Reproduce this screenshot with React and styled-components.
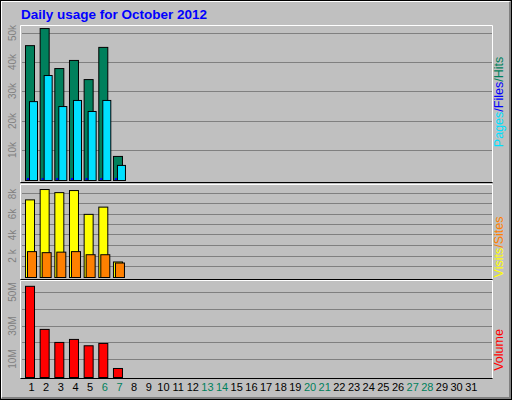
import React from "react";
import styled, { createGlobalStyle } from "styled-components";

const Global = createGlobalStyle`
  html, body { margin: 0; padding: 0; background: #fff; }
  body { font-family: "Liberation Sans", Arial, sans-serif; }
`;

const Frame = styled.div`
  width: 512px;
  height: 400px;
  box-sizing: border-box;
  border: 1px solid #000;
  background: #c0c0c0;
`;

const Bevel = styled.div`
  width: 510px;
  height: 398px;
  box-sizing: border-box;
  border-top: 1px solid #fff;
  border-left: 1px solid #fff;
  border-right: 2px solid #808080;
  border-bottom: 2px solid #808080;
`;

const Chart = styled.svg`
  display: block;
  font-family: "Liberation Sans", Arial, sans-serif;
`;

const hits = [46.5, 52.4, 38.6, 41.4, 34.8, 45.9, 8.3];
const files = [27.2, 36.2, 25.5, 27.6, 23.8, 27.6, 5.2];
const visits = [7.5, 8.5, 8.2, 8.4, 6.1, 6.8, 1.5];
const sites = [2.5, 2.4, 2.45, 2.5, 2.2, 2.2, 1.4];
const vol = [54.6, 28.8, 21, 22.8, 19, 20.4, 5.4];
const weekend = [6, 7, 13, 14, 20, 21, 27, 28];

const gx = (i) => 23 + i * 14.66;

function Bar({ x, w, top, base, fill }) {
  return <rect x={x + 0.5} y={top + 0.5} width={w} height={Math.max(base - top, 1)} fill={fill} stroke="#000" strokeWidth="1" />;
}

function Panel({ y1, y2, lines }) {
  return (
    <g>
      {lines.map((ly) => (
        <line key={ly} x1="20" x2="490" y1={ly + 0.5} y2={ly + 0.5} stroke="#808080" strokeWidth="1" />
      ))}
      <path d={`M18.5 ${y2} V${y1 + 0.5} H490.5 V${y2}`} fill="none" stroke="#fff" strokeWidth="1" />
      <path d={`M18.5 ${y2 + 0.5} H490.5`} stroke="#000" strokeWidth="1" />
    </g>
  );
}

export default function App() {
  const b1 = 178, k1 = 2.9;
  const b2 = 275, k2 = 10.35;
  const b3 = 375, k3 = 1.67;
  return (
    <>
      <Global />
      <Frame>
        <Bevel>
          <Chart width="507" height="395" viewBox="0 0 507 395">
            <text x="19" y="17" fill="#0000ff" fontWeight="bold" fontSize="13.5">Daily usage for October 2012</text>

            <Panel y1={23} y2={180} lines={[31, 60, 89, 119, 148]} />
            <Panel y1={182} y2={277} lines={[191, 201, 212, 222, 232, 243, 254, 264]} />
            <Panel y1={278} y2={376} lines={[290, 307, 324, 340, 357]} />

            {[["50k", 31], ["40k", 60], ["30k", 89], ["20k", 119], ["10k", 148], ["8k", 192], ["6k", 212], ["4k", 233], ["2 k", 254], ["50M", 290], ["30M", 324], ["10M", 357]].map(([t, y]) => (
              <text key={t} transform={`translate(14 ${y}) rotate(-90)`} textAnchor="middle" fontSize="10" fill="#808080">{t}</text>
            ))}

            {hits.map((h, i) => {
              const x = gx(i);
              return (
                <g key={i}>
                  <Bar x={x} w={9} top={b1 - h * k1} base={b1} fill="#00805c" />
                  <rect x={x + 2} y={b1 - 2} width="2" height="2" fill="#0000ff" />
                  <Bar x={x + 4} w={8} top={b1 - files[i] * k1} base={b1} fill="#00e0ff" />
                  <Bar x={x} w={9} top={b2 - visits[i] * k2} base={b2} fill="#ffff00" />
                  <Bar x={x + 2} w={9} top={b2 - sites[i] * k2} base={b2} fill="#ff8000" />
                  <Bar x={x} w={9} top={b3 - vol[i] * k3} base={b3} fill="#ff0000" />
                </g>
              );
            })}

            {Array.from({ length: 31 }, (_, i) => i + 1).map((d) => (
              <text key={d} x={gx(d - 1) + 6.5} y="389" textAnchor="middle" fontSize="11" fill={weekend.includes(d) ? "#00805c" : "#000"}>{d}</text>
            ))}

            <text transform="translate(501 100) rotate(-90)" textAnchor="middle" fontSize="12.5">
              <tspan fill="#00e0ff">Pages</tspan><tspan fill="#0000ff">/Files</tspan><tspan fill="#00805c">/Hits</tspan>
            </text>
            <text transform="translate(501 245) rotate(-90)" textAnchor="middle" fontSize="12.5">
              <tspan fill="#ffff00">Visits</tspan><tspan fill="#ff8000">/Sites</tspan>
            </text>
            <text transform="translate(501 348) rotate(-90)" textAnchor="middle" fontSize="12.5" fill="#ff0000">Volume</text>
          </Chart>
        </Bevel>
      </Frame>
    </>
  );
}
